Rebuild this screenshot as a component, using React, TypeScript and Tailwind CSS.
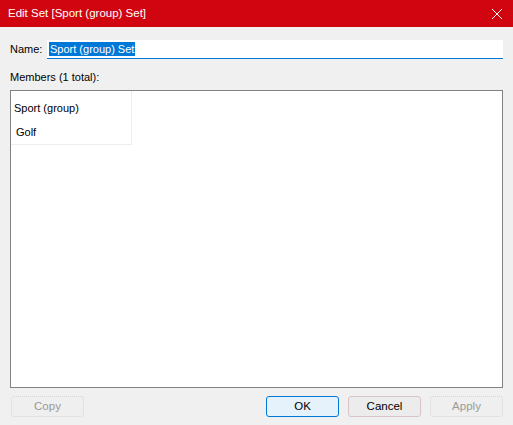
import React from "react";

const font = { fontFamily: '"Liberation Sans", Arial, sans-serif' };

function Btn({ label, variant }: { label: string; variant: "primary" | "normal" | "disabled" }) {
  const cls =
    variant === "primary"
      ? "border-[#0078d7] bg-[#e5f1fb] text-black"
      : variant === "normal"
      ? "border-[#d8c4c8] bg-[#ececec] text-black"
      : "border-dotted border-[#d6d6d6] bg-[#efefef] text-[#9a9a9a]";
  return (
    <div className={`w-[73px] h-[21px] flex items-center justify-center border rounded-[3px] text-[11.5px] ${cls}`}>
      {label}
    </div>
  );
}

export default function App() {
  return (
    <div className="w-[513px] h-[425px] bg-[#f0f0f0] flex flex-col overflow-hidden" style={font}>
      {/* title bar */}
      <div className="h-[27px] bg-[#d0050f] flex items-center justify-between pl-[8px] pr-[10px] text-white">
        <span className="text-[11.5px]">Edit Set [Sport (group) Set]</span>
        <svg width="12" height="12" viewBox="0 0 12 12" stroke="white" strokeWidth="1">
          <path d="M1 1L11 11M11 1L1 11" />
        </svg>
      </div>

      <div className="flex-1 flex flex-col px-[10px] text-[11px]">
        {/* name row */}
        <div className="flex items-center mt-[13px] h-[19px]">
          <span className="w-[37px] shrink-0 text-black">Name:</span>
          <div className="flex-1 h-[19px] bg-white border-b border-[#0078d7] flex items-center pl-[2px]">
            <span className="bg-[#0078d7] text-white leading-[14px] px-[1px]">Sport (group) Set</span>
          </div>
        </div>

        <div className="mt-[9px] h-[18px] leading-[18px] text-black">Members (1 total):</div>

        {/* list */}
        <div className="mt-[4px] h-[298px] bg-white border border-[#828282]">
          <div className="w-[121px] border-r border-b border-[#eeeeee] text-black">
            <div className="h-[29px] flex items-end pb-[4px] pl-[3px]">Sport (group)</div>
            <div className="h-[24px] flex items-center pl-[5px] pt-[1px]">Golf</div>
          </div>
        </div>

        {/* buttons */}
        <div className="mt-[8px] flex items-center pl-[1px]">
          <Btn label="Copy" variant="disabled" />
          <div className="flex-1" />
          <div className="flex gap-[9px]">
            <Btn label="OK" variant="primary" />
            <Btn label="Cancel" variant="normal" />
            <Btn label="Apply" variant="disabled" />
          </div>
        </div>
      </div>
    </div>
  );
}
